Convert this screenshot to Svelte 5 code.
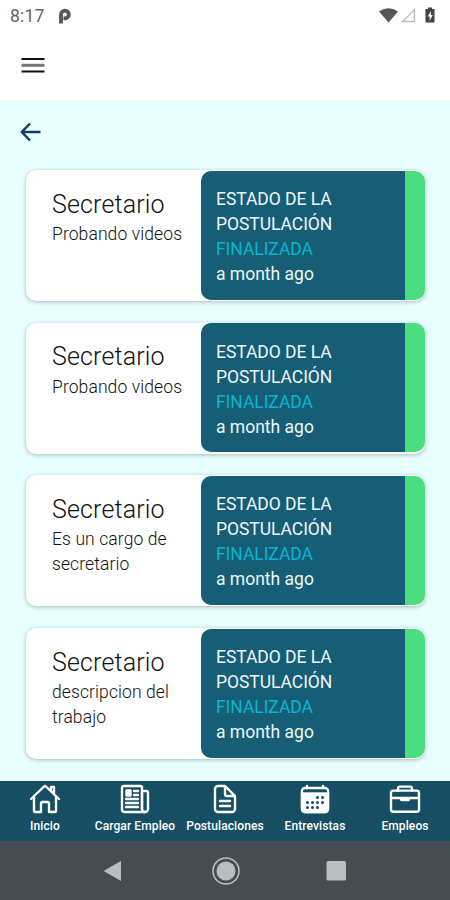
<script lang="ts">
  interface Application {
    id: number;
    title: string;
    description: string;
    status: string;
    updated: string;
  }

  const applications: Application[] = [
    { id: 1, title: "Secretario", description: "Probando videos", status: "FINALIZADA", updated: "a month ago" },
    { id: 2, title: "Secretario", description: "Probando videos", status: "FINALIZADA", updated: "a month ago" },
    { id: 3, title: "Secretario", description: "Es un cargo de secretario", status: "FINALIZADA", updated: "a month ago" },
    { id: 4, title: "Secretario", description: "descripcion del trabajo", status: "FINALIZADA", updated: "a month ago" },
  ];

  const tabs = [
    { icon: "home", label: "Inicio" },
    { icon: "news", label: "Cargar Empleo" },
    { icon: "document", label: "Postulaciones" },
    { icon: "calendar", label: "Entrevistas" },
    { icon: "briefcase", label: "Empleos" },
  ];
</script>

<div class="screen">
  <div class="status-bar">
    <span class="clock">8:17</span>
    <svg class="parking" width="15" height="16" viewBox="0 0 15 16">
      <path d="M4 15.500V6.500a3.900 3.900 0 1 1 3.900 3.900H6.500" fill="none" stroke="#555" stroke-width="3.800" />
    </svg>
    <svg class="signals" width="60" height="18" viewBox="0 0 60 18">
      <path d="M0 4.500Q9.500 -2 19 4.500L9.500 15.500Z" fill="#555" />
      <path d="M35.500 2.500V14.500H23.500Z" fill="none" stroke="#bbb" stroke-width="1.300" />
      <path d="M46.500 2h2.500V.5h4V2h2.500v13.500h-9Z" fill="#444" />
      <path d="m52 4-3.300 5.500h2V14l3-6h-1.900Z" fill="#fff" />
    </svg>
  </div>

  <header class="toolbar">
    <button type="button" class="icon-button" aria-label="Menu">
      <svg width="24" height="18" viewBox="0 0 24 18">
        <path d="M.5 3h23M.5 15.500h23" stroke="#111" stroke-width="2" />
        <path d="M.5 9.300h23" stroke="#777" stroke-width="3" />
      </svg>
    </button>
  </header>

  <main class="content">
    <button type="button" class="icon-button back" aria-label="Volver">
      <svg width="22" height="20" viewBox="0 0 22 20">
        <path d="M10 1.500 1.800 10 10 18.500M2 10h18.500" fill="none" stroke="#103f5b" stroke-width="2.500" />
      </svg>
    </button>

    <div class="cards">
      {#each applications as application (application.id)}
        <article class="card">
          <div class="job">
            <h2>{application.title}</h2>
            <p>{application.description}</p>
          </div>
          <div class="state">
            <div class="state-label">ESTADO DE LA POSTULACIÓN</div>
            <div class="state-value">{application.status}</div>
            <div class="state-date">{application.updated}</div>
          </div>
        </article>
      {/each}
    </div>
  </main>

  <nav class="tabs">
    {#each tabs as tab (tab.icon)}
      <button type="button" class="tab">
        <svg width="32" height="32" viewBox="0 0 512 512">
          {#if tab.icon === "home"}
            <path d="M80 212v236a16 16 0 0 0 16 16h96V328a24 24 0 0 1 24-24h80a24 24 0 0 1 24 24v136h96a16 16 0 0 0 16-16V212" />
            <path d="M480 256 266.890 52c-5-5.280-16.690-5.340-21.780 0L32 256M400 179V64h-48v69" />
          {:else if tab.icon === "news"}
            <path d="M368 415.860V72a24.070 24.070 0 0 0-24-24H72a24.070 24.070 0 0 0-24 24v352a40.120 40.120 0 0 0 40 40h328" />
            <path d="M416 464a48 48 0 0 1-48-48V128h72a24 24 0 0 1 24 24v264a48 48 0 0 1-48 48Z" />
            <path d="M240 128h64M240 192h64M112 256h192M112 320h192M112 384h192" />
            <path class="filled" d="M120 120h64v80h-64z" />
          {:else if tab.icon === "document"}
            <path d="M416 221.250V416a48 48 0 0 1-48 48H144a48 48 0 0 1-48-48V96a48 48 0 0 1 48-48h98.750a32 32 0 0 1 22.620 9.370l141.260 141.260a32 32 0 0 1 9.370 22.620Z" />
            <path d="M256 56v120a32 32 0 0 0 32 32h120M176 288h160M176 368h160" />
          {:else if tab.icon === "calendar"}
            <rect x="48" y="80" width="416" height="384" rx="48" />
            <path d="M128 48v32M384 48v32" />
            <path class="filled" d="M48 160h416v256a48 48 0 0 1-48 48H96a48 48 0 0 1-48-48Z" />
            <path class="rule" d="M64 136h384" />
            {#each [[296, 232], [376, 232], [136, 312], [216, 312], [296, 312], [376, 312], [136, 392], [216, 392], [296, 392]] as [cx, cy]}
              <circle class="day" {cx} {cy} r="24" />
            {/each}
          {:else}
            <rect x="32" y="122" width="448" height="338" rx="36" />
            <path d="M144 122V90a32 32 0 0 1 32-32h160a32 32 0 0 1 32 32v32M480 240H32M320 240v24a8 8 0 0 1-8 8H200a8 8 0 0 1-8-8v-24" />
          {/if}
        </svg>
        <span>{tab.label}</span>
      </button>
    {/each}
  </nav>

  <div class="system-nav">
    <svg width="30" height="30" viewBox="0 0 30 30"><path d="M21 5v20L3.500 15Z" /></svg>
    <svg width="30" height="30" viewBox="0 0 30 30">
      <circle cx="15" cy="15" r="9.500" />
      <circle class="ring" cx="15" cy="15" r="13" />
    </svg>
    <svg width="30" height="30" viewBox="0 0 30 30"><rect x="5.500" y="5" width="19.500" height="19.500" rx="1.500" /></svg>
  </div>
</div>

<style>
  :global(body) {
    margin: 0;
  }
  .screen {
    display: flex;
    flex-direction: column;
    width: 450px;
    height: 900px;
    overflow: hidden;
    background: #fff;
    color: #111;
    font-family: Roboto, sans-serif;
  }
  button {
    padding: 0;
    border: none;
    background: none;
    font: inherit;
    cursor: pointer;
  }
  svg {
    display: block;
  }
  .status-bar {
    display: flex;
    align-items: center;
    height: 32px;
    padding: 0 11px 0 10px;
    color: #666;
  }
  .clock {
    width: 47px;
    font-size: 17.5px;
    letter-spacing: 0.2px;
  }
  .signals {
    margin-left: auto;
  }
  .toolbar {
    display: flex;
    align-items: center;
    box-sizing: border-box;
    height: 68px;
    padding: 0 0 2px 21px;
  }
  .content {
    flex: 1;
    min-height: 0;
    background: #e8ffff;
  }
  .back {
    display: block;
    padding: 22px 0 0 20px;
  }
  .cards {
    display: flex;
    flex-direction: column;
    gap: 21.7px;
    padding: 28px 25px 0 26px;
  }
  .card {
    display: grid;
    grid-template-columns: 175px 1fr;
    box-sizing: border-box;
    height: 131px;
    padding: 0.5px 0 1.5px;
    border-radius: 10px;
    background: #fff;
    box-shadow: 0 1px 4px rgba(0, 0, 0, 0.28);
  }
  .job {
    padding: 18px 0 0 26px;
  }
  h2 {
    margin: 0 0 1.5px;
    font-size: 25px;
    font-weight: 300;
    line-height: 32px;
    letter-spacing: 0.15px;
  }
  p {
    margin: 0;
    font-size: 17.5px;
    font-weight: 300;
    line-height: 25px;
    letter-spacing: 0.1px;
  }
  .state {
    box-sizing: border-box;
    padding: 16.5px 50px 0 15px;
    border-right: 20px solid #4ade80;
    border-radius: 10px;
    background: #155e75;
    color: #eef6f9;
    font-size: 17.5px;
    line-height: 25px;
  }
  .state-value {
    color: #06b6d4;
  }
  .state-value,
  .state-label {
    letter-spacing: -0.05px;
  }
  .tabs {
    display: grid;
    grid-template-columns: repeat(5, 1fr);
    height: 60px;
    background: #164e63;
  }
  .tab {
    display: flex;
    flex-direction: column;
    align-items: center;
    padding-top: 2px;
    color: #fff;
    font-size: 12px;
    font-weight: 500;
    line-height: 14px;
    letter-spacing: 0.1px;
    white-space: nowrap;
  }
  .tab svg {
    margin-bottom: 4px;
    fill: none;
    stroke: #fff;
    stroke-width: 38;
    stroke-linecap: round;
    stroke-linejoin: round;
  }
  .tab .filled {
    fill: #fff;
  }
  .tab .day {
    fill: #164e63;
    stroke: none;
  }
  .tab .rule {
    stroke: #164e63;
    stroke-width: 26;
    stroke-linecap: butt;
  }
  .system-nav {
    display: flex;
    align-items: center;
    justify-content: space-between;
    box-sizing: border-box;
    height: 59px;
    padding: 0 99px 0 100px;
    background: #454d52;
  }
  .system-nav svg {
    fill: #b9bec0;
  }
  .system-nav .ring {
    fill: none;
    stroke: #b9bec0;
    stroke-width: 1.6;
  }
</style>
